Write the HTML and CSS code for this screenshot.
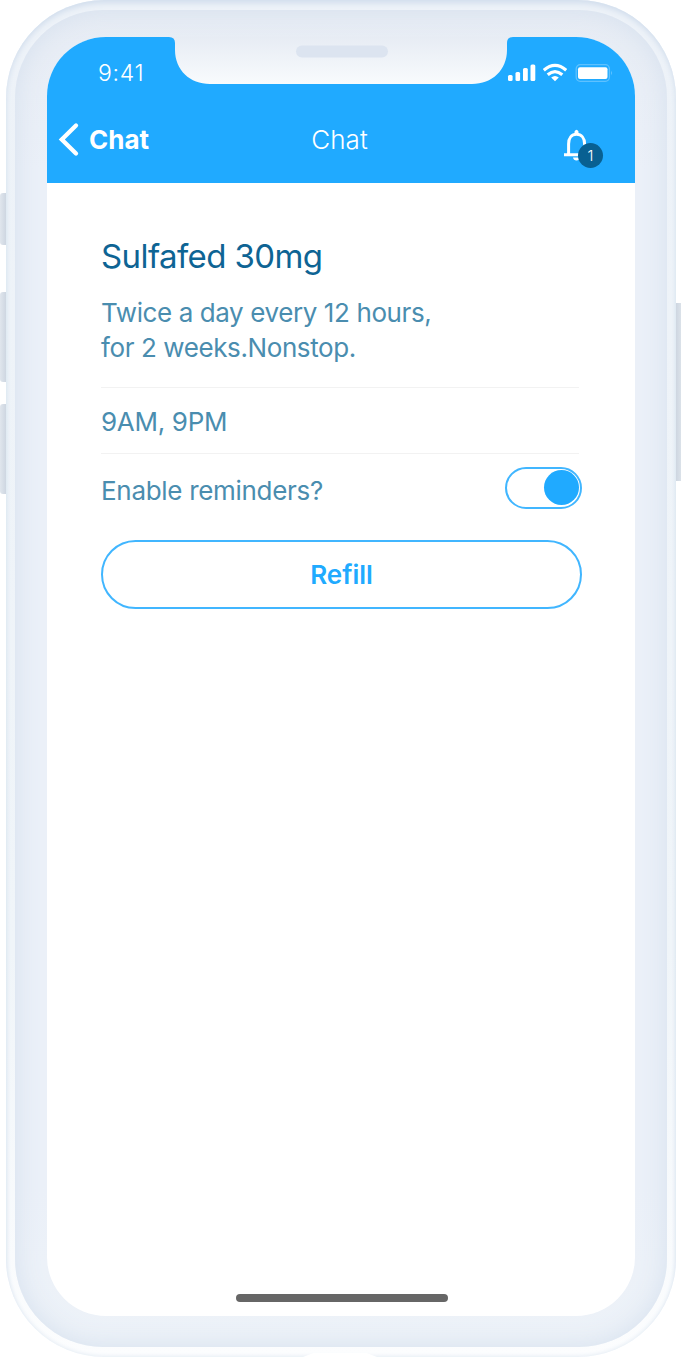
FILE: index.html
```html
<!DOCTYPE html>
<html lang="en">
<head>
  <meta charset="UTF-8" />
  <meta name="viewport" content="width=device-width, initial-scale=1" />
  <title>Chat</title>
  <link rel="stylesheet" href="styles.css">
</head>
<body>
  <div class="phone">
    <span class="side-btn mute"></span>
    <span class="side-btn vol-up"></span>
    <span class="side-btn vol-down"></span>
    <span class="side-btn power"></span>

    <div class="bezel">
      <div class="screen">
        <header>
          <div class="status-bar">
            <span class="time">9:41</span>
            <svg class="status-icons" width="106" height="20" viewBox="0 0 106 20" fill="#fff">
              <rect x="1" y="12" width="4.6" height="6" rx="1.5" />
              <rect x="8.5" y="9" width="4.6" height="9" rx="1.5" />
              <rect x="16" y="5" width="4.8" height="13" rx="1.5" />
              <rect x="23.5" y="1.5" width="4.8" height="16.5" rx="1.5" />
              <g fill="none" stroke="#fff" stroke-width="3.2">
                <path d="M36.8 7.2Q48 -2.4 59.2 7.2" />
                <path d="M40.7 11.8Q48 5.6 55.3 11.8" />
              </g>
              <path d="M44.2 14.6Q48 11.6 51.8 14.6L48 18.3Z" />
              <rect x="69.2" y="1.7" width="33.2" height="16.6" rx="4" fill="none" stroke="#fff" stroke-opacity=".28" stroke-width="1.3" />
              <rect x="71" y="4.3" width="29.5" height="11.7" rx="2" />
              <path d="M104.3 7.5Q106 10 104.3 12.5Z" fill-opacity=".4" />
            </svg>
          </div>
          <nav>
            <a class="back" href="#">
              <svg width="22" height="36" viewBox="0 0 22 36" fill="none" stroke="#fff" stroke-width="4.3" stroke-linecap="round">
                <path d="M18 3.5L3.8 17.5L18 31.5" />
              </svg>
              <span>Chat</span>
            </a>
            <h1>Chat</h1>
            <div class="bell">
              <svg width="28" height="34" viewBox="0 0 28 34">
                <path d="M5.6 25V15C5.6 9 8.6 5.3 13.5 5.3S21.6 9 21.6 15V25M1 25.7H26" fill="none" stroke="#fff" stroke-width="3" />
                <path d="M11.5 5V2.5Q13.5 -.8 15.5 2.5V5ZM10 28.5H17Q16.5 31.500 13.5 31.5T10 28.5Z" fill="#fff" />
              </svg>
              <span class="badge">1</span>
            </div>
          </nav>
        </header>

        <main>
          <h2>Sulfafed 30mg</h2>
          <p class="dosage">Twice a day every 12 hours,<br>for 2 weeks.Nonstop.</p>
          <div class="times">9AM, 9PM</div>
          <div class="reminders">
            <span>Enable reminders?</span>
            <button class="toggle" role="switch" aria-checked="true" aria-label="Enable reminders"></button>
          </div>
          <button class="refill">Refill</button>
        </main>
        <div class="home-indicator"></div>
      </div>

      <svg class="notch" width="344" height="48" viewBox="0 0 344 48">
        <defs>
          <linearGradient id="notch-fill" x1="0" y1="0" x2="0" y2="1">
            <stop offset="0" stop-color="#e7ecf4" />
            <stop offset="1" stop-color="#f8fbfd" />
          </linearGradient>
        </defs>
        <path d="M0 0H344Q338 0 338 6V13C338 33 323 47 303 47H41C21 47 6 33 6 13V6Q6 0 0 0Z" fill="url(#notch-fill)" />
        <rect x="127" y="8.5" width="92" height="12" rx="6" fill="#dce4f0" />
      </svg>
    </div>
    <span class="port"></span>
  </div>
</body>
</html>
```
FILE: styles.css
```css
:root {
  --blue: #20aaff;
  --navy: #0e6494;
  --steel: #4a8daf;
  --line: #f2f2f2;
}
* { box-sizing: border-box; }
body {
  margin: 0;
  background: #fff;
  font-family: Inter, sans-serif;
  overflow: hidden;
}
h1, h2, p { margin: 0; font-weight: 400; }
button { font-family: inherit; cursor: pointer; }

.phone {
  position: relative;
  width: 670px;
  height: 1357px;
  margin-left: 6px;
  padding: 10px 9px;
  border-radius: 98px;
  background: linear-gradient(#edf2f8, #f0f5f9 70%, #fcfdfe);
  box-shadow: inset 0 5px 6px -2px #d2deed, inset 0 0 5px #dce6f1;
}
.bezel {
  position: relative;
  height: 1337px;
  padding: 27px 32px 31px;
  border-radius: 88px;
  background: linear-gradient(#e7ecf4, #ebf0f8 12%, #ebf0f8 88%, #edf2f8);
  box-shadow: inset 0 0 26px #d5e0ee;
}
.screen {
  height: 1279px;
  border-radius: 59px;
  background: #fff;
  overflow: hidden;
  display: flex;
  flex-direction: column;
}

/* hardware buttons */
.side-btn {
  position: absolute;
  left: -6px;
  width: 6px;
  border-radius: 3px 0 0 3px;
  background: linear-gradient(90deg, #e0e6ed, #ced6e1);
}
.mute { top: 193px; height: 52px; }
.vol-up { top: 292px; height: 90px; }
.vol-down { top: 404px; height: 90px; }
.power {
  left: 670px;
  top: 303px;
  width: 5px;
  height: 178px;
  border-radius: 0;
  background: linear-gradient(90deg, #ced6e1, #dbe2e9);
}
.port {
  position: absolute;
  left: 297px;
  bottom: 0;
  width: 74px;
  height: 4px;
  background: #fff;
  clip-path: polygon(14% 0, 86% 0, 100% 100%, 0 100%);
}
.notch {
  position: absolute;
  left: 154px;
  top: 27px;
}

/* header */
header {
  height: 146px;
  background: var(--blue);
  color: #fff;
}
.status-bar {
  display: flex;
  justify-content: space-between;
  padding: 23px 22px 0 51px;
  height: 75px;
}
.time {
  font-size: 23px;
  font-weight: 300;
  line-height: 26px;
  letter-spacing: 0.7px;
}
.status-icons { margin-top: 3px; }
nav {
  display: grid;
  grid-template-columns: 1fr auto 1fr;
  align-items: start;
  padding: 10px 14px 0 11px;
}
.back {
  display: flex;
  align-items: center;
  gap: 9px;
  color: #fff;
  font-size: 26px;
  font-weight: 700;
  line-height: 36px;
  text-decoration: none;
}
h1 {
  font-size: 26px;
  font-weight: 300;
  line-height: 36px;
}
.bell {
  position: relative;
  justify-self: end;
  width: 41px;
  height: 42px;
  margin-right: 17px;
  padding-top: 7px;
}
.badge {
  position: absolute;
  right: 1px;
  top: 21px;
  width: 25px;
  height: 25px;
  border-radius: 50%;
  background: #086092;
  font-size: 15px;
  font-weight: 300;
  line-height: 26px;
  text-align: center;
}

/* medication */
main {
  padding: 52px 53px 0 54px;
  color: var(--steel);
  font-size: 26px;
  letter-spacing: -0.4px;
  white-space: nowrap;
}
h2 {
  color: var(--navy);
  font-size: 33px;
  line-height: 42px;
  letter-spacing: -0.6px;
}
.dosage {
  height: 111px;
  margin-right: 3px;
  padding-top: 18px;
  line-height: 35px;
  border-bottom: 1px solid var(--line);
}
.times {
  height: 66px;
  margin-right: 3px;
  line-height: 68px;
  letter-spacing: -0.3px;
  border-bottom: 1px solid var(--line);
}
.reminders {
  display: flex;
  justify-content: space-between;
  height: 86px;
  padding-top: 13px;
  line-height: 47px;
  letter-spacing: -0.3px;
}
.toggle {
  display: flex;
  justify-content: flex-end;
  align-items: center;
  width: 77px;
  height: 42px;
  padding: 0 1px 1px;
  border: 2px solid #41b6ff;
  border-radius: 21px;
  background: #fff;
}
.toggle::after {
  content: "";
  width: 35px;
  height: 35px;
  border-radius: 50%;
  background: var(--blue);
}
.refill {
  width: 100%;
  height: 69px;
  padding: 0;
  border: 2px solid #41b6ff;
  border-radius: 35px;
  background: #fff;
  color: var(--blue);
  font-size: 26px;
  font-weight: 600;
}
.home-indicator {
  width: 212px;
  height: 8px;
  margin: auto auto 14px 189px;
  border-radius: 4px;
  background: #666;
}
```
